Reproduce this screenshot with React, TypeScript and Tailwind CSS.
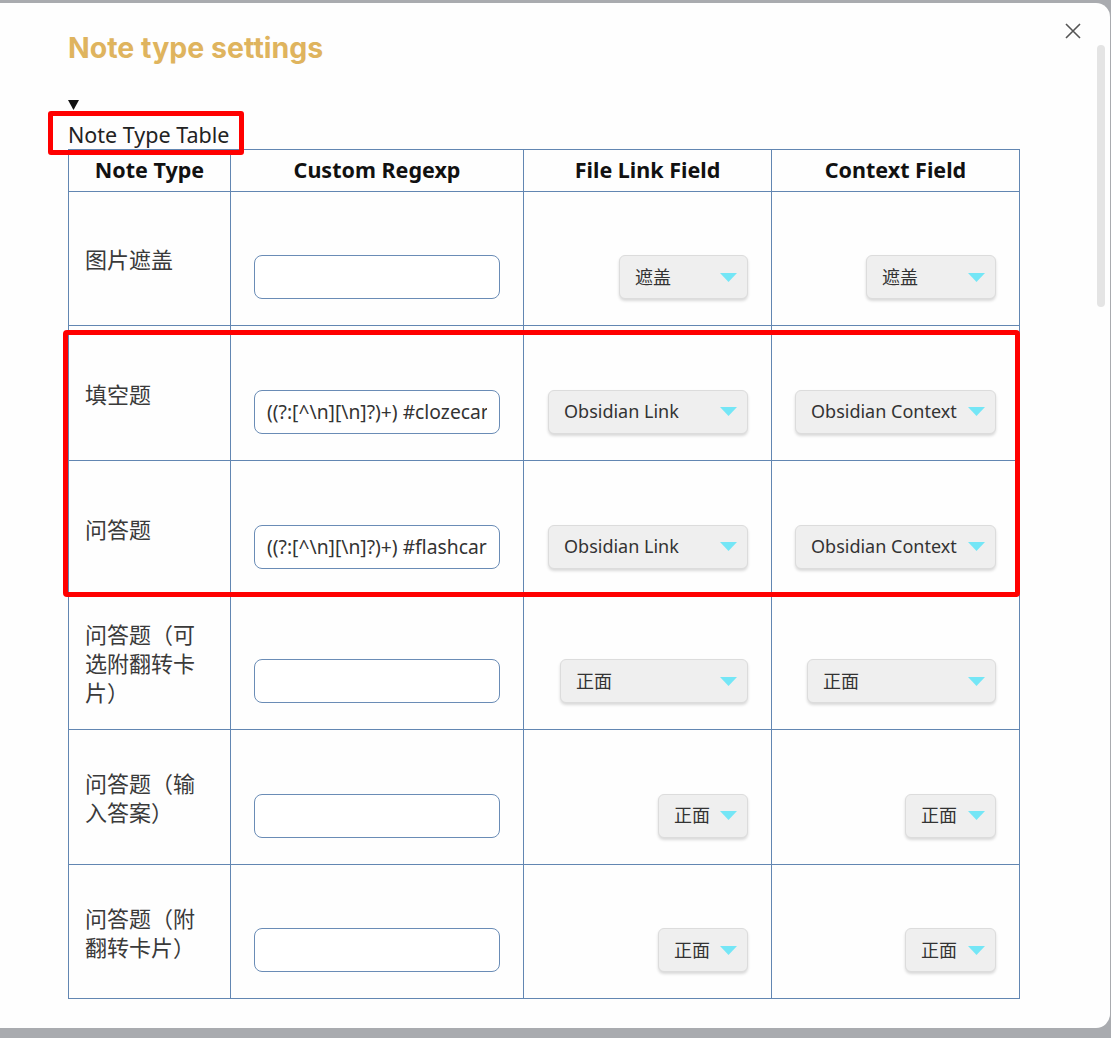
import React from "react";

type Pick = { label: string; w: string };
type Row = { name: string; regex: string; link: Pick; ctx: Pick; h: string };

const rows: Row[] = [
  { name: "图片遮盖", regex: "", link: { label: "遮盖", w: "w-[129px]" }, ctx: { label: "遮盖", w: "w-[130px]" }, h: "h-[134px]" },
  {
    name: "填空题",
    regex: "((?:[^\\n][\\n]?)+) #clozecard",
    link: { label: "Obsidian Link", w: "w-[200px]" },
    ctx: { label: "Obsidian Context", w: "w-[201px]" },
    h: "h-[135px]",
  },
  {
    name: "问答题",
    regex: "((?:[^\\n][\\n]?)+) #flashcard",
    link: { label: "Obsidian Link", w: "w-[200px]" },
    ctx: { label: "Obsidian Context", w: "w-[201px]" },
    h: "h-[135px]",
  },
  { name: "问答题（可选附翻转卡片）", regex: "", link: { label: "正面", w: "w-[188px]" }, ctx: { label: "正面", w: "w-[189px]" }, h: "h-[134px]" },
  { name: "问答题（输入答案）", regex: "", link: { label: "正面", w: "w-[90px]" }, ctx: { label: "正面", w: "w-[91px]" }, h: "h-[135px]" },
  { name: "问答题（附翻转卡片）", regex: "", link: { label: "正面", w: "w-[90px]" }, ctx: { label: "正面", w: "w-[91px]" }, h: "h-[134px]" },
];

export default function App() {
  return (
    <div className="min-h-screen bg-[#a9abaf] pt-[3px] pr-px font-['Noto_Sans','Noto_Sans_CJK_SC',sans-serif]">
      <div className="relative h-[1025px] overflow-hidden rounded-r-[14px] bg-[#fefefe]">
        <button className="absolute right-[27px] top-[18px] text-[#555]">
          <svg width="20" height="20" viewBox="0 0 20 20" fill="none" stroke="currentColor" strokeWidth="1.6">
            <path d="M3 3 L17 17 M17 3 L3 17" />
          </svg>
        </button>
        <div className="absolute right-[5px] top-[42px] h-[262px] w-[8px] rounded-full bg-[#e4e4e4]" />

        <div className="pl-[68px] pt-[29px]">
          <h1 className="font-['Inter',sans-serif] text-[28.5px] font-bold leading-[32px] text-[#dfb45e]">Note type settings</h1>

          <svg className="mt-[36px]" width="11" height="10" viewBox="0 0 11 10">
            <polygon points="0,0 11,0 5.5,10" fill="#111" />
          </svg>
          <div className="mt-[11px] h-[28px] text-[21.5px] leading-[28px] text-[#222]">Note Type Table</div>

          <table className="w-[951px] table-fixed border-collapse">
            <colgroup>
              <col className="w-[162px]" />
              <col className="w-[293px]" />
              <col className="w-[248px]" />
              <col className="w-[248px]" />
            </colgroup>
            <thead>
              <tr className="h-[42px]">
                {["Note Type", "Custom Regexp", "File Link Field", "Context Field"].map((h) => (
                  <th key={h} className="border border-[#6286b2] text-center text-[21.5px] font-bold text-[#111]">
                    {h}
                  </th>
                ))}
              </tr>
            </thead>
            <tbody>
              {rows.map((r) => (
                <tr key={r.name} className={r.h}>
                  <td className="border border-[#6286b2] px-4 align-middle font-['Noto_Sans_CJK_SC',sans-serif] text-[22px] leading-[29px] text-[#3a3a3a]">
                    {r.name}
                  </td>
                  <td className="border border-[#6286b2] px-[23px] pt-[37px] align-middle">
                    <input
                      readOnly
                      defaultValue={r.regex}
                      className="h-[44px] w-[246px] rounded-[8px] border border-[#6a8cb6] bg-white px-[12px] text-[19.3px] text-[#333] outline-none"
                    />
                  </td>
                  <td className="border border-[#6286b2] pr-[23px] pt-[37px] align-middle">
                    <Dropdown pick={r.link} />
                  </td>
                  <td className="border border-[#6286b2] pr-[23px] pt-[37px] align-middle">
                    <Dropdown pick={r.ctx} />
                  </td>
                </tr>
              ))}
            </tbody>
          </table>
        </div>

        <div className="pointer-events-none absolute left-[48px] top-[108px] h-[44px] w-[196px] rounded-[3px] border-[5px] border-[#ff0000]" />
        <div className="pointer-events-none absolute left-[63px] top-[327px] h-[267px] w-[957px] rounded-[4px] border-[5px] border-[#ff0000]" />
      </div>
    </div>
  );
}

function Dropdown({ pick }: { pick: Pick }) {
  return (
    <div
      className={`ml-auto flex h-[44px] ${pick.w} items-center justify-between rounded-[6px] border border-[#dcdcdc] bg-[#efefef] pl-[15px] pr-[10px] shadow-[0_2px_3px_rgba(0,0,0,0.15)]`}
    >
      <span className="truncate font-['Noto_Sans','Noto_Sans_CJK_SC',sans-serif] text-[18px] text-[#333]">{pick.label}</span>
      <svg className="shrink-0" width="17" height="9" viewBox="0 0 17 9">
        <polygon points="0,0 17,0 8.5,9" fill="#74e6f6" />
      </svg>
    </div>
  );
}
